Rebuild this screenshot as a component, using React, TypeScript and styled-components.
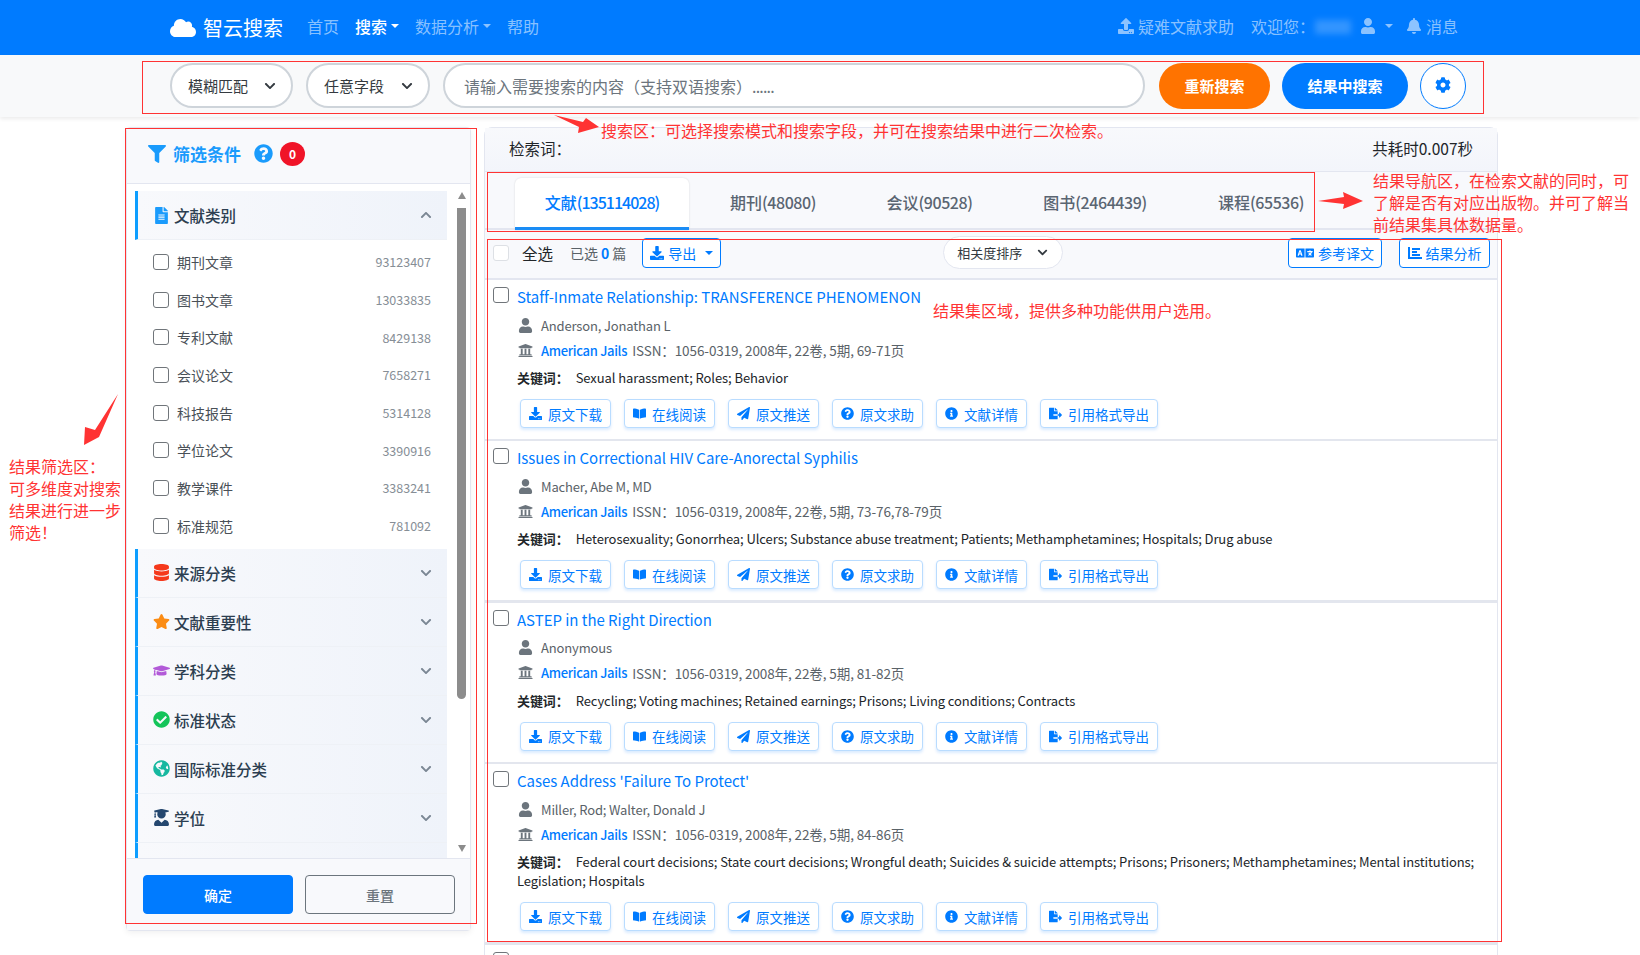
import React from "react";
import styled, { createGlobalStyle } from "styled-components";
import {
  FaBell, FaBookOpen, FaCheckCircle, FaChevronDown, FaChevronUp, FaCloud, FaCog,
  FaDatabase, FaDownload, FaFileAlt, FaFileExport, FaFilter, FaGlobeAmericas, FaGraduationCap,
  FaInfoCircle, FaLanguage, FaPaperPlane, FaQuestionCircle, FaStar, FaUniversity, FaUpload,
  FaUser, FaUserGraduate,
} from "react-icons/fa";

const GlobalStyle = createGlobalStyle`
  html, body { margin: 0; padding: 0; background: #fff; }
  body {
    height: 955px;
    overflow: hidden;
    font-family: "Noto Sans CJK SC", "Noto Sans", sans-serif;
    font-size: 14px;
    color: #212529;
  }
  * { box-sizing: border-box; }
`;

const Page = styled.div`
  position: relative;
  width: 1640px;
  height: 955px;
  overflow: hidden;
`;

/* top navigation */
const Header = styled.header`
  height: 55px;
  background: #007bff;
  display: flex;
  align-items: center;
  padding: 0 182px 0 170px;
  color: rgba(255, 255, 255, 0.55);
  font-size: 16px;
`;
const Logo = styled.div`
  display: flex;
  align-items: center;
  gap: 7px;
  color: #fff;
  font-size: 20px;
  margin-right: 24px;
  svg { font-size: 26px; }
`;
const NavItem = styled.span<{ $active?: boolean; $caret?: boolean }>`
  display: flex;
  align-items: center;
  margin: -3px 16px 0 0;
  color: ${(p) => (p.$active ? "#fff" : "inherit")};
  font-weight: ${(p) => (p.$active ? 500 : 400)};
  &::after {
    content: "";
    display: ${(p) => (p.$caret ? "block" : "none")};
    margin-left: 4px;
    border-top: 4px solid currentColor;
    border-left: 4px solid transparent;
    border-right: 4px solid transparent;
  }
`;
const HeaderRight = styled.div`
  margin-left: auto;
  margin-top: -3px;
  display: flex;
  align-items: center;
`;
const HeaderLink = styled.span<{ $left?: number; $right?: number }>`
  display: flex;
  align-items: center;
  gap: 4px;
  margin-left: ${(p) => p.$left ?? 0}px;
  margin-right: ${(p) => p.$right ?? 0}px;
`;
const BlurName = styled.span`
  width: 36px;
  height: 14px;
  margin: 2px 9px 0 0;
  background: rgba(255, 255, 255, 0.2);
  filter: blur(3px);
`;
const Caret = styled.span`
  margin-left: 5px;
  border-top: 4px solid currentColor;
  border-left: 4px solid transparent;
  border-right: 4px solid transparent;
`;

/* search strip */
const SearchStrip = styled.div`
  height: 62px;
  background: #f8f9fa;
  box-shadow: 0 2px 4px rgba(0, 0, 0, 0.08);
  display: flex;
  align-items: flex-start;
  padding: 8px 0 0 170px;
`;
const Pill = styled.div<{ $width: number }>`
  width: ${(p) => p.$width}px;
  height: 45px;
  margin-right: 13px;
  display: flex;
  align-items: center;
  justify-content: space-between;
  padding: 0 15px 0 16px;
  background: #fff;
  border: 2px solid #ced4da;
  border-radius: 23px;
  font-size: 15px;
  color: #343a40;
  svg { font-size: 12px; }
`;
const SearchInput = styled.div`
  width: 702px;
  height: 45px;
  margin-right: 14px;
  display: flex;
  align-items: center;
  padding: 0 19px;
  background: #fff;
  border: 2px solid #ced4da;
  border-radius: 23px;
  font-size: 16px;
  color: #6c757d;
`;
const Dots = styled.span`
  letter-spacing: -0.8px;
`;
const SearchButton = styled.button<{ $bg: string; $width: number }>`
  width: ${(p) => p.$width}px;
  height: 46px;
  margin-right: 12px;
  padding: 0 0 2px;
  border: 0;
  border-radius: 23px;
  background: ${(p) => p.$bg};
  color: #fff;
  font: 600 15px "Noto Sans CJK SC", sans-serif;
`;
const GearButton = styled.button`
  width: 46px;
  height: 46px;
  border: 1px solid #007bff;
  border-radius: 50%;
  background: #fff;
  color: #007bff;
  display: flex;
  align-items: center;
  justify-content: center;
  padding: 0 1px 2px 0;
  font-size: 16px;
`;

/* two columns */
const Content = styled.div`
  display: flex;
  align-items: flex-start;
  gap: 13px;
  padding: 10px 0 0 126px;
`;
const FilterPanel = styled.aside`
  width: 345px;
  height: 804px;
  display: flex;
  flex-direction: column;
  background: #fff;
  border: 1px solid #e3e6f0;
  border-radius: 4px;
  box-shadow: 0 2px 6px rgba(0, 0, 0, 0.06);
`;
const FilterHead = styled.div`
  height: 56px;
  flex: none;
  display: flex;
  align-items: center;
  padding: 0 0 4px 21px;
  background: #f8f9fc;
  border-bottom: 1px solid #e3e6f0;
  color: #1a9bfc;
  font-size: 17px;
  font-weight: 600;
`;
const FilterIcon = styled(FaFilter)`
  font-size: 18px;
  margin-right: 7px;
`;
const HelpIcon = styled(FaQuestionCircle)`
  font-size: 19px;
  margin-left: 13px;
`;
const CountBadge = styled.span`
  width: 25px;
  height: 24px;
  margin-left: 7px;
  border-radius: 50%;
  background: #f01428;
  color: #fff;
  display: flex;
  align-items: center;
  justify-content: center;
  font-size: 12px;
`;
const FilterBody = styled.div`
  flex: 1;
  min-height: 0;
  display: flex;
  padding: 7px 4px 0 8px;
`;
const FilterList = styled.div`
  width: 315px;
  overflow: hidden;
`;
const GroupHead = styled.div`
  height: 49px;
  display: flex;
  align-items: center;
  padding: 0 15px 0 15px;
  background: linear-gradient(90deg, #f8f9fc, #eff3fa);
  border-left: 3px solid #0d9eff;
  border-bottom: 1px solid #eef1f6;
  font-size: 15.5px;
  font-weight: 500;
  color: #2c3e50;
`;
const GroupIcon = styled.span<{ $color: string }>`
  display: flex;
  margin-right: 4px;
  color: ${(p) => p.$color};
  font-size: 17px;
`;
const GroupChevron = styled.span`
  margin-left: auto;
  display: flex;
  color: #7b8794;
  font-size: 12px;
`;
const OptionList = styled.div`
  padding: 3px 16px 4px 18px;
`;
const OptionRow = styled.label`
  height: 37.7px;
  display: flex;
  align-items: center;
  color: #495057;
`;
const Check = styled.input.attrs({ type: "checkbox" })<{ $light?: boolean }>`
  appearance: none;
  flex: none;
  width: 16px;
  height: 16px;
  margin: 0;
  background: #fff;
  border: 1px solid ${(p) => (p.$light ? "#dde0e5" : "#70757a")};
  border-radius: 3px;
`;
const OptionName = styled.span`
  margin-left: 8px;
`;
const OptionCount = styled.span`
  margin-left: auto;
  color: #868e96;
  font-size: 12.5px;
`;
const ScrollTrack = styled.div`
  width: 9px;
  margin-left: 10px;
  display: flex;
  flex-direction: column;
  align-items: center;
  color: #8c8c8c;
`;
const ScrollArrow = styled.span<{ $down?: boolean }>`
  flex: none;
  margin: ${(p) => (p.$down ? "auto 0 6px" : "1px 0 9px")};
  border-left: 4.5px solid transparent;
  border-right: 4.5px solid transparent;
  border-top: ${(p) => (p.$down ? "7px solid currentColor" : "0")};
  border-bottom: ${(p) => (p.$down ? "0" : "7px solid currentColor")};
`;
const ScrollThumb = styled.span`
  width: 9px;
  height: 491px;
  border-radius: 0 0 5px 5px;
  background: currentColor;
`;
const FilterFoot = styled.div`
  height: 72px;
  flex: none;
  display: flex;
  gap: 12px;
  padding: 16px 15px 0 16px;
  background: #f8f9fc;
  border-top: 1px solid #e3e6f0;
`;
const FootButton = styled.button<{ $primary?: boolean }>`
  flex: 1;
  height: 39px;
  border: 1px solid ${(p) => (p.$primary ? "#007bff" : "#6c757d")};
  border-radius: 4px;
  background: ${(p) => (p.$primary ? "#007bff" : "transparent")};
  color: ${(p) => (p.$primary ? "#fff" : "#6c757d")};
  font: 500 14px "Noto Sans CJK SC", sans-serif;
`;

/* results column */
const ResultsPanel = styled.main`
  width: 1014px;
  background: #fff;
  border: 1px solid #e3e6f0;
  border-radius: 8px 8px 0 0;
`;
const QueryBar = styled.div`
  height: 44px;
  display: flex;
  align-items: center;
  justify-content: space-between;
  padding: 0 24px 4px;
  background: linear-gradient(180deg, #f8f9fc, #f3f5fb);
  border-bottom: 1px solid #e3e6f0;
  font-size: 15.5px;
`;
const TabBar = styled.div`
  height: 58px;
  display: flex;
  align-items: flex-start;
  padding: 6px 0 0 30px;
  background: #f8f9fc;
  border-bottom: 2px solid #e3e6f0;
`;
const Tab = styled.div<{ $active?: boolean; $width: number }>`
  width: ${(p) => p.$width}px;
  height: 52px;
  flex: none;
  padding-top: 7px;
  text-align: center;
  line-height: 34px;
  font-size: 16px;
  font-weight: 500;
  color: ${(p) => (p.$active ? "#007bff" : "#5a6572")};
  background: ${(p) => (p.$active ? "#fff" : "transparent")};
  border-radius: 6px 6px 0 0;
  border-bottom: ${(p) => (p.$active ? "3px solid #1a8cf5" : "0")};
  box-shadow: ${(p) => (p.$active ? "0 0 2px rgba(0,0,0,.15)" : "none")};
`;
const TabCount = styled.span<{ $tight?: boolean }>`
  letter-spacing: ${(p) => (p.$tight ? "-1px" : "-0.4px")};
`;
const ToolBar = styled.div`
  height: 50px;
  display: flex;
  align-items: center;
  padding: 0 0 3px 8px;
  background: #f8f9fc;
  border-bottom: 2px solid #e3e6f0;
`;
const SelectAll = styled.span`
  margin: 0 17px 0 13px;
  font-size: 15.5px;
`;
const SelectedInfo = styled.span`
  margin-right: 16px;
  color: #5a6268;
  font-size: 14px;
  b { color: #007bff; margin: 0 3px; }
`;
const OutlineButton = styled.button<{ $width: number }>`
  width: ${(p) => p.$width}px;
  height: 30px;
  display: inline-flex;
  align-items: center;
  justify-content: center;
  gap: 4px;
  padding: 0;
  background: #fff;
  border: 1px solid #007bff;
  border-radius: 4px;
  color: #007bff;
  font: 14px "Noto Sans CJK SC", sans-serif;
  svg { font-size: 14px; }
`;
const LangIcon = styled(FaLanguage)`
  && { font-size: 18px; }
`;
const SortPill = styled.div`
  width: 120px;
  height: 33px;
  margin-left: 222px;
  display: flex;
  align-items: center;
  justify-content: space-between;
  padding: 0 14px 0 13px;
  background: #fff;
  border: 1px solid #e3e6f0;
  border-radius: 17px;
  font-size: 13px;
  color: #343a40;
  svg { font-size: 11px; }
`;
const ToolRight = styled.div`
  margin-left: auto;
  margin-right: 7px;
  display: flex;
  gap: 17px;
`;
const ResultList = styled.div`
  display: flex;
  flex-direction: column;
  gap: 2.4px;
  background: #e3e6ee;
`;
const ResultItem = styled.article`
  background: #fff;
  padding: 5px 16px 11px 8px;
`;
const TitleRow = styled.div`
  display: flex;
  gap: 8px;
  height: 24px;
  align-items: flex-start;
  input { margin-top: 2px; }
`;
const Title = styled.a`
  color: #007bff;
  font-size: 15px;
  line-height: 24px;
  letter-spacing: -0.03px;
`;
const MetaRow = styled.div<{ $top: number }>`
  display: flex;
  align-items: center;
  height: 24px;
  margin: ${(p) => p.$top}px 0 0 25px;
  color: #5a6268;
  font-size: 13px;
  letter-spacing: -0.15px;
  a { color: #007bff; font-weight: 500; margin-right: 5px; letter-spacing: -0.3px; }
`;
const MetaPlain = styled.span`
  font-size: 13.5px;
  letter-spacing: -0.1px;
`;
const MetaIcon = styled.span`
  width: 23px;
  flex: none;
  display: flex;
  color: #6c757d;
  font-size: 15px;
`;
const Keywords = styled.div`
  margin: 6px 0 0 24px;
  font-size: 13px;
  line-height: 19px;
  letter-spacing: -0.08px;
  color: #212529;
  b { font-weight: 600; margin-right: 7px; }
`;
const ActionRow = styled.div`
  display: flex;
  gap: 13px;
  margin: 12px 0 0 27px;
`;
const ActionButton = styled.button`
  height: 29px;
  display: inline-flex;
  align-items: center;
  gap: 6px;
  padding: 0 8px;
  background: #fff;
  border: 1px solid #b9dcff;
  border-radius: 4px;
  box-shadow: 0 2px 3px rgba(0, 123, 255, 0.15);
  color: #007bff;
  font: 13.5px "Noto Sans CJK SC", sans-serif;
  svg { font-size: 13px; }
`;

/* red notes drawn on top of the page */
const Frame = styled.div<{ $x: number; $y: number; $w: number; $h: number }>`
  position: absolute;
  left: ${(p) => p.$x}px;
  top: ${(p) => p.$y}px;
  width: ${(p) => p.$w}px;
  height: ${(p) => p.$h}px;
  border: 1px solid #f33;
  pointer-events: none;
`;
const Note = styled.div<{ $x: number; $y: number; $w?: number }>`
  position: absolute;
  left: ${(p) => p.$x}px;
  top: ${(p) => p.$y}px;
  width: ${(p) => (p.$w ? `${p.$w}px` : "auto")};
  color: #f33;
  font-size: 16px;
  line-height: 22px;
  white-space: pre-line;
`;
const ArrowOverlay = styled.svg`
  position: absolute;
  left: 0;
  top: 0;
  width: 1640px;
  height: 955px;
  pointer-events: none;
`;

const options = [
  ["期刊文章", "93123407"],
  ["图书文章", "13033835"],
  ["专利文献", "8429138"],
  ["会议论文", "7658271"],
  ["科技报告", "5314128"],
  ["学位论文", "3390916"],
  ["教学课件", "3383241"],
  ["标准规范", "781092"],
];

const groups = [
  { name: "来源分类", color: "#f5391c", icon: <FaDatabase /> },
  { name: "文献重要性", color: "#fb8c14", icon: <FaStar /> },
  { name: "学科分类", color: "#b25ad8", icon: <FaGraduationCap /> },
  { name: "标准状态", color: "#14c45a", icon: <FaCheckCircle /> },
  { name: "国际标准分类", color: "#16b8a0", icon: <FaGlobeAmericas /> },
  { name: "学位", color: "#24476f", icon: <FaUserGraduate /> },
];

const results = [
  {
    title: "Staff-Inmate Relationship: TRANSFERENCE PHENOMENON",
    author: "Anderson, Jonathan L",
    pages: "69-71页",
    keywords: "Sexual harassment; Roles; Behavior",
  },
  {
    title: "Issues in Correctional HIV Care-Anorectal Syphilis",
    author: "Macher, Abe M, MD",
    pages: "73-76,78-79页",
    keywords:
      "Heterosexuality; Gonorrhea; Ulcers; Substance abuse treatment; Patients; Methamphetamines; Hospitals; Drug abuse",
  },
  {
    title: "ASTEP in the Right Direction",
    author: "Anonymous",
    pages: "81-82页",
    keywords: "Recycling; Voting machines; Retained earnings; Prisons; Living conditions; Contracts",
  },
  {
    title: "Cases Address 'Failure To Protect'",
    author: "Miller, Rod; Walter, Donald J",
    pages: "84-86页",
    keywords:
      "Federal court decisions; State court decisions; Wrongful death; Suicides & suicide attempts; Prisons; Prisoners; Methamphetamines; Mental institutions; Legislation; Hospitals",
  },
];

const actions = [
  { label: "原文下载", icon: <FaDownload /> },
  { label: "在线阅读", icon: <FaBookOpen /> },
  { label: "原文推送", icon: <FaPaperPlane /> },
  { label: "原文求助", icon: <FaQuestionCircle /> },
  { label: "文献详情", icon: <FaInfoCircle /> },
  { label: "引用格式导出", icon: <FaFileExport /> },
];

// horizontal bars on an L axis, the pack's chart-bar stands the other way
function BarsIcon() {
  return (
    <svg width="14" height="14" viewBox="0 0 14 14" fill="currentColor">
      <path d="M0 1h2v10h12v2H0z" />
      <rect x="4" y="2" width="8" height="2" />
      <rect x="4" y="5" width="5" height="2" />
      <rect x="4" y="8" width="8" height="2" />
    </svg>
  );
}

export default function App() {
  return (
    <Page>
      <GlobalStyle />
      <Header>
        <Logo>
          <FaCloud />
          智云搜索
        </Logo>
        <NavItem>首页</NavItem>
        <NavItem $active $caret>搜索</NavItem>
        <NavItem $caret>数据分析</NavItem>
        <NavItem>帮助</NavItem>
        <HeaderRight>
          <HeaderLink $right={17}>
            <FaUpload />
            疑难文献求助
          </HeaderLink>
          <span>欢迎您：</span>
          <BlurName />
          <HeaderLink>
            <FaUser />
            <Caret />
          </HeaderLink>
          <HeaderLink $left={13}>
            <FaBell />
            消息
          </HeaderLink>
        </HeaderRight>
      </Header>

      <SearchStrip>
        <Pill $width={123}>
          模糊匹配
          <FaChevronDown />
        </Pill>
        <Pill $width={124}>
          任意字段
          <FaChevronDown />
        </Pill>
        <SearchInput>请输入需要搜索的内容（支持双语搜索）<Dots>......</Dots></SearchInput>
        <SearchButton $bg="#ff7300" $width={111}>重新搜索</SearchButton>
        <SearchButton $bg="#007bff" $width={126}>结果中搜索</SearchButton>
        <GearButton>
          <FaCog />
        </GearButton>
      </SearchStrip>

      <Content>
        <FilterPanel>
          <FilterHead>
            <FilterIcon />
            筛选条件
            <HelpIcon />
            <CountBadge>0</CountBadge>
          </FilterHead>
          <FilterBody>
            <FilterList>
              <GroupHead>
                <GroupIcon $color="#1a9bfc"><FaFileAlt /></GroupIcon>
                文献类别
                <GroupChevron><FaChevronUp /></GroupChevron>
              </GroupHead>
              <OptionList>
                {options.map(([name, count]) => (
                  <OptionRow key={name}>
                    <Check />
                    <OptionName>{name}</OptionName>
                    <OptionCount>{count}</OptionCount>
                  </OptionRow>
                ))}
              </OptionList>
              {groups.map((g) => (
                <GroupHead key={g.name}>
                  <GroupIcon $color={g.color}>{g.icon}</GroupIcon>
                  {g.name}
                  <GroupChevron><FaChevronDown /></GroupChevron>
                </GroupHead>
              ))}
              <GroupHead />
            </FilterList>
            <ScrollTrack>
              <ScrollArrow />
              <ScrollThumb />
              <ScrollArrow $down />
            </ScrollTrack>
          </FilterBody>
          <FilterFoot>
            <FootButton $primary>确定</FootButton>
            <FootButton>重置</FootButton>
          </FilterFoot>
        </FilterPanel>

        <ResultsPanel>
          <QueryBar>
            <span>检索词：</span>
            <span>共耗时0.007秒</span>
          </QueryBar>
          <TabBar>
            <Tab $active $width={174}>文献<TabCount $tight>(135114028)</TabCount></Tab>
            <Tab $width={168}>期刊<TabCount>(48080)</TabCount></Tab>
            <Tab $width={145}>会议<TabCount>(90528)</TabCount></Tab>
            <Tab $width={186}>图书<TabCount>(2464439)</TabCount></Tab>
            <Tab $width={146}>课程<TabCount>(65536)</TabCount></Tab>
          </TabBar>
          <ToolBar>
            <Check $light />
            <SelectAll>全选</SelectAll>
            <SelectedInfo>已选<b>0</b>篇</SelectedInfo>
            <OutlineButton $width={79}>
              <FaDownload />
              导出
              <Caret />
            </OutlineButton>
            <SortPill>
              相关度排序
              <FaChevronDown />
            </SortPill>
            <ToolRight>
              <OutlineButton $width={94}>
                <LangIcon />
                参考译文
              </OutlineButton>
              <OutlineButton $width={91}>
                <BarsIcon />
                结果分析
              </OutlineButton>
            </ToolRight>
          </ToolBar>
          <ResultList>
            {results.map((r) => (
              <ResultItem key={r.title}>
                <TitleRow>
                  <Check />
                  <Title>{r.title}</Title>
                </TitleRow>
                <MetaRow $top={4}>
                  <MetaIcon><FaUser /></MetaIcon>
                  {r.author}
                </MetaRow>
                <MetaRow $top={1}>
                  <MetaIcon><FaUniversity /></MetaIcon>
                  <a>American Jails</a>
                  <MetaPlain>ISSN：1056-0319, 2008年, 22卷, 5期, {r.pages}</MetaPlain>
                </MetaRow>
                <Keywords>
                  <b>关键词：</b>
                  {r.keywords}
                </Keywords>
                <ActionRow>
                  {actions.map((a) => (
                    <ActionButton key={a.label}>
                      {a.icon}
                      {a.label}
                    </ActionButton>
                  ))}
                </ActionRow>
              </ResultItem>
            ))}
            <ResultItem>
              <TitleRow>
                <Check />
              </TitleRow>
            </ResultItem>
          </ResultList>
        </ResultsPanel>
      </Content>

      <Frame $x={142} $y={61} $w={1342} $h={53} />
      <Frame $x={125} $y={128} $w={352} $h={796} />
      <Frame $x={487} $y={172} $w={828} $h={60} />
      <Frame $x={487} $y={239} $w={1015} $h={703} />
      <ArrowOverlay viewBox="0 0 1640 955">
        <polygon points="554,115 583,122 586,118 599,127 578,133 579,127" fill="#f33" />
        <polygon points="1318,201 1344,197 1343,192 1363,201 1343,209 1344,204" fill="#f33" />
        <polygon points="118,394 95,430 85,427 84,445 99,437" fill="#f33" />
      </ArrowOverlay>
      <Note $x={601} $y={119}>搜索区：可选择搜索模式和搜索字段，并可在搜索结果中进行二次检索。</Note>
      <Note $x={1373} $y={169} $w={262}>
        结果导航区，在检索文献的同时，可{"\n"}了解是否有对应出版物。并可了解当{"\n"}前结果集具体数据量。
      </Note>
      <Note $x={933} $y={299}>结果集区域，提供多种功能供用户选用。</Note>
      <Note $x={9} $y={455} $w={116}>
        结果筛选区：{"\n"}可多维度对搜索{"\n"}结果进行进一步{"\n"}筛选！
      </Note>
    </Page>
  );
}
